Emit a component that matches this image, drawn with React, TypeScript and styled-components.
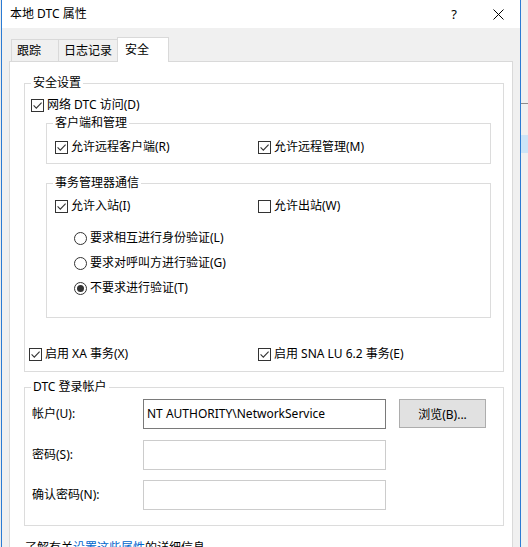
import styled, { createGlobalStyle } from "styled-components";

const GlobalStyle = createGlobalStyle`
  html, body {
    margin: 0;
    padding: 0;
  }
  body {
    font-family: "Noto Sans", "Noto Sans CJK SC", sans-serif;
    font-size: 12px;
    color: #000;
    background: #f0f0f0;
  }
`;

const Screen = styled.div`
  display: flex;
  width: 528px;
  height: 547px;
  overflow: hidden;
`;

// window behind the dialog, only a sliver of it shows
const BehindLeft = styled.div`
  flex: none;
  width: 1px;
  background: #ececec;
`;

const BehindRight = styled.div`
  flex: 1;
  display: flex;
  flex-direction: column;
  background: #f0f0f0;
`;

const BehindLine = styled.div`
  height: 1px;
  margin-top: 103px;
  background: #8c8c8c;
`;

const BehindSelection = styled.div`
  height: 18px;
  margin-top: 31px;
  background: #cce4f7;
`;

const Dialog = styled.div`
  flex: none;
  width: 518px;
  display: flex;
  flex-direction: column;
  border-left: 1px solid #2b7bd3;
  border-right: 1px solid #2b7bd3;
  background: #f0f0f0;
`;

const TitleBar = styled.div`
  flex: none;
  height: 28px;
  display: flex;
  align-items: center;
  padding-left: 8px;
  background: #fff;
`;

const Title = styled.div`
  flex: 1;
  line-height: 16px;
`;

const CaptionButton = styled.div`
  width: 44px;
  height: 28px;
  display: flex;
  align-items: center;
  justify-content: center;
  font-size: 13px;
`;

const Body = styled.div`
  flex: 1;
  display: flex;
  flex-direction: column;
  padding: 9px 7px 0;
`;

const TabRow = styled.div`
  display: flex;
  align-items: flex-end;
  height: 24px;
  padding-left: 2px;
`;

const Tab = styled.div<{ $active?: boolean; $first?: boolean; $width: number }>`
  position: relative;
  box-sizing: border-box;
  width: ${(p) => p.$width}px;
  height: ${(p) => (p.$active ? 25 : 22)}px;
  margin-bottom: ${(p) => (p.$active ? -1 : 0)}px;
  margin-left: ${(p) => (p.$active ? -1 : 0)}px;
  padding-left: ${(p) => (p.$active ? 7 : 5)}px;
  display: flex;
  align-items: center;
  line-height: 16px;
  border: 1px solid #d9d9d9;
  border-bottom: none;
  border-left-width: ${(p) => (p.$first || p.$active ? 1 : 0)}px;
  background: ${(p) => (p.$active ? "#fff" : "#f0f0f0")};
`;

const Panel = styled.div`
  flex: 1;
  background: #fff;
  border: 1px solid #d9d9d9;
  border-bottom: none;
  padding: 13px 8px 0 14px;
`;

const GroupBox = styled.fieldset<{ $margin?: string }>`
  margin: ${(p) => p.$margin ?? "0"};
  padding: 0;
  min-width: 0;
  border: 1px solid #dcdcdc;
`;

const GroupTitle = styled.legend`
  margin-left: 6px;
  padding: 0 2px;
  line-height: 16px;
`;

const GroupBody = styled.div<{ $padding: string }>`
  display: flex;
  flex-direction: column;
  padding: ${(p) => p.$padding};
`;

const TwoCol = styled.div<{ $first: number; $mt?: number }>`
  display: grid;
  grid-template-columns: ${(p) => p.$first}px 1fr;
  margin-top: ${(p) => p.$mt ?? 0}px;
`;

const OptionRow = styled.label<{ $indent?: number }>`
  display: flex;
  align-items: center;
  gap: 3px;
  height: 16px;
  line-height: 16px;
  white-space: nowrap;
  margin-left: ${(p) => p.$indent ?? 0}px;
`;

const Box = styled.span`
  flex: none;
  box-sizing: border-box;
  width: 13px;
  height: 13px;
  border: 1px solid #333;
  background: #fff;
  display: flex;
`;

const Round = styled(Box)`
  border-radius: 50%;
  align-items: center;
  justify-content: center;
`;

const Dot = styled.span`
  width: 7px;
  height: 7px;
  border-radius: 50%;
  background: #333;
`;

const RadioList = styled.div`
  display: flex;
  flex-direction: column;
  gap: 9px;
  margin: 16px 0 0 19px;
`;

const FormGrid = styled.div`
  display: grid;
  grid-template-columns: 111px 243px auto;
  grid-auto-rows: 30px;
  row-gap: 10.5px;
  align-items: center;
`;

const FieldLabel = styled.div`
  line-height: 16px;
`;

const TextBox = styled.input<{ $strong?: boolean }>`
  box-sizing: border-box;
  width: 100%;
  height: 30px;
  margin: 0;
  padding: 0 3px 1px;
  border: 1px solid ${(p) => (p.$strong ? "#7a7a7a" : "#cccccc")};
  background: #fff;
  font: inherit;
  color: #000;
  outline: none;
`;

const PushButton = styled.button`
  box-sizing: border-box;
  align-self: start;
  width: 87px;
  height: 29px;
  margin: 0 0 0 13px;
  padding: 0;
  border: 1px solid #adadad;
  background: #e1e1e1;
  font: inherit;
  color: #000;
`;

const LearnMore = styled.div`
  margin: 14px 0 0 1px;
  line-height: 16px;
  white-space: nowrap;
`;

const Link = styled.span`
  color: #0066cc;
`;

const Check = ({ label, checked, indent }: { label: string; checked?: boolean; indent?: number }) => (
  <OptionRow $indent={indent}>
    <Box>
      {checked && (
        <svg width="11" height="11" viewBox="0 0 11 11">
          <path d="M1.6 5.4 L4.3 8.1 L9.6 2.6" fill="none" stroke="#333" strokeWidth="1.1" />
        </svg>
      )}
    </Box>
    {label}
  </OptionRow>
);

const Radio = ({ label, checked }: { label: string; checked?: boolean }) => (
  <OptionRow>
    <Round>{checked && <Dot />}</Round>
    {label}
  </OptionRow>
);

export default function App() {
  return (
    <>
      <GlobalStyle />
      <Screen>
        <BehindLeft />
        <Dialog>
          <TitleBar>
            <Title>本地 DTC 属性</Title>
            <CaptionButton>?</CaptionButton>
            <CaptionButton>
              <svg width="11" height="11" viewBox="0 0 11 11">
                <path d="M0.5 0.5 L10.5 10.5 M10.5 0.5 L0.5 10.5" stroke="#000" strokeWidth="1" />
              </svg>
            </CaptionButton>
          </TitleBar>
          <Body>
            <TabRow>
              <Tab $first $width={48}>跟踪</Tab>
              <Tab $width={59}>日志记录</Tab>
              <Tab $active $width={52}>安全</Tab>
            </TabRow>
            <Panel>
              <GroupBox>
                <GroupTitle>安全设置</GroupTitle>
                <GroupBody $padding="6px 12px 9px 4px">
                  <Check indent={2} checked label="网络 DTC 访问(D)" />
                  <GroupBox $margin="2px 0 0 17px">
                    <GroupTitle>客户端和管理</GroupTitle>
                    <GroupBody $padding="8px 0 8px 8px">
                      <TwoCol $first={203}>
                        <Check checked label="允许远程客户端(R)" />
                        <Check checked label="允许远程管理(M)" />
                      </TwoCol>
                    </GroupBody>
                  </GroupBox>
                  <GroupBox $margin="11px 0 0 17px">
                    <GroupTitle>事务管理器通信</GroupTitle>
                    <GroupBody $padding="7px 0 21px 8px">
                      <TwoCol $first={203}>
                        <Check checked label="允许入站(I)" />
                        <Check label="允许出站(W)" />
                      </TwoCol>
                      <RadioList>
                        <Radio label="要求相互进行身份验证(L)" />
                        <Radio label="要求对呼叫方进行验证(G)" />
                        <Radio checked label="不要求进行验证(T)" />
                      </RadioList>
                    </GroupBody>
                  </GroupBox>
                  <TwoCol $first={229} $mt={28}>
                    <Check checked label="启用 XA 事务(X)" />
                    <Check checked label="启用 SNA LU 6.2 事务(E)" />
                  </TwoCol>
                </GroupBody>
              </GroupBox>
              <GroupBox $margin="7px 0 0 0">
                <GroupTitle>DTC 登录帐户</GroupTitle>
                <GroupBody $padding="4px 0 15px 7px">
                  <FormGrid>
                    <FieldLabel>帐户(U):</FieldLabel>
                    <TextBox $strong readOnly value="NT AUTHORITY\NetworkService" />
                    <PushButton>浏览(B)...</PushButton>
                    <FieldLabel>密码(S):</FieldLabel>
                    <TextBox readOnly value="" />
                    <span />
                    <FieldLabel>确认密码(N):</FieldLabel>
                    <TextBox readOnly value="" />
                    <span />
                  </FormGrid>
                </GroupBody>
              </GroupBox>
              <LearnMore>
                了解有关<Link>设置这些属性</Link>的详细信息
              </LearnMore>
            </Panel>
          </Body>
        </Dialog>
        <BehindRight>
          <BehindLine />
          <BehindSelection />
        </BehindRight>
      </Screen>
    </>
  );
}
